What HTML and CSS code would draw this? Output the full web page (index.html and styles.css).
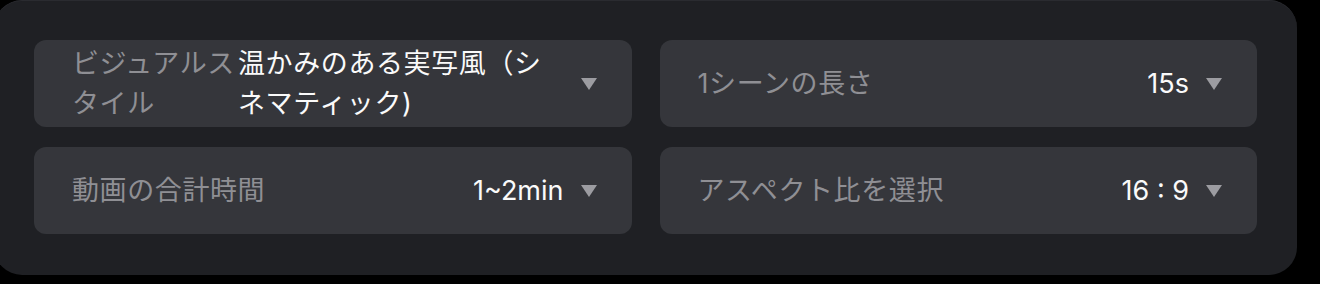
FILE: index.html
```html
<!DOCTYPE html>
<html lang="ja">
<head>
<meta charset="utf-8">
<title>設定</title>
<link rel="stylesheet" href="styles.css">
</head>
<body>
<div class="panel">
  <div class="grid">
    <div class="field">
      <span class="label label--wrap">ビジュアルスタイル</span>
      <span class="value value--wrap">温かみのある実写風（シネマティック)</span>
      <span class="caret"></span>
    </div>
    <div class="field">
      <span class="label">1シーンの長さ</span>
      <span class="value">15s</span>
      <span class="caret"></span>
    </div>
    <div class="field">
      <span class="label">動画の合計時間</span>
      <span class="value">1~2min</span>
      <span class="caret"></span>
    </div>
    <div class="field">
      <span class="label">アスペクト比を選択</span>
      <span class="value">16 : 9</span>
      <span class="caret"></span>
    </div>
  </div>
</div>
</body>
</html>
```
FILE: styles.css
```css
html, body {
  margin: 0;
  padding: 0;
  background: #000;
}
body {
  font-family: "Inter", "Noto Sans CJK JP", sans-serif;
  font-size: 27px;
  line-height: 40px;
  width: 1320px;
  height: 284px;
  overflow: hidden;
}
.panel {
  margin-left: -6px;
  width: 1303px;
  height: 275px;
  box-sizing: border-box;
  padding: 39px 40px 40px 40px;
  background: #1f2024;
  border-radius: 28px;
  border-top: 1px solid #2a2b30;
}
.grid {
  display: grid;
  grid-template-columns: 1fr 1fr;
  grid-template-rows: 87px 87px;
  column-gap: 28px;
  row-gap: 20px;
}
.field {
  display: flex;
  align-items: center;
  background: #35363b;
  border-radius: 12px;
  padding: 0 35px 0 38px;
  min-width: 0;
}
.label {
  flex: 1 1 auto;
  color: #8f8f94;
  letter-spacing: 0.6px;
}
.label--wrap {
  flex: 0 0 166px;
}
.value {
  color: #fafafa;
  margin-right: 17px;
  white-space: nowrap;
}
.value--wrap {
  flex: 0 0 318px;
  white-space: normal;
  letter-spacing: 0.6px;
  margin-right: auto;
}
.caret {
  flex: none;
  width: 0;
  height: 0;
  border-left: 8.5px solid transparent;
  border-right: 8.5px solid transparent;
  border-top: 12px solid #9c9ca1;
}
```
